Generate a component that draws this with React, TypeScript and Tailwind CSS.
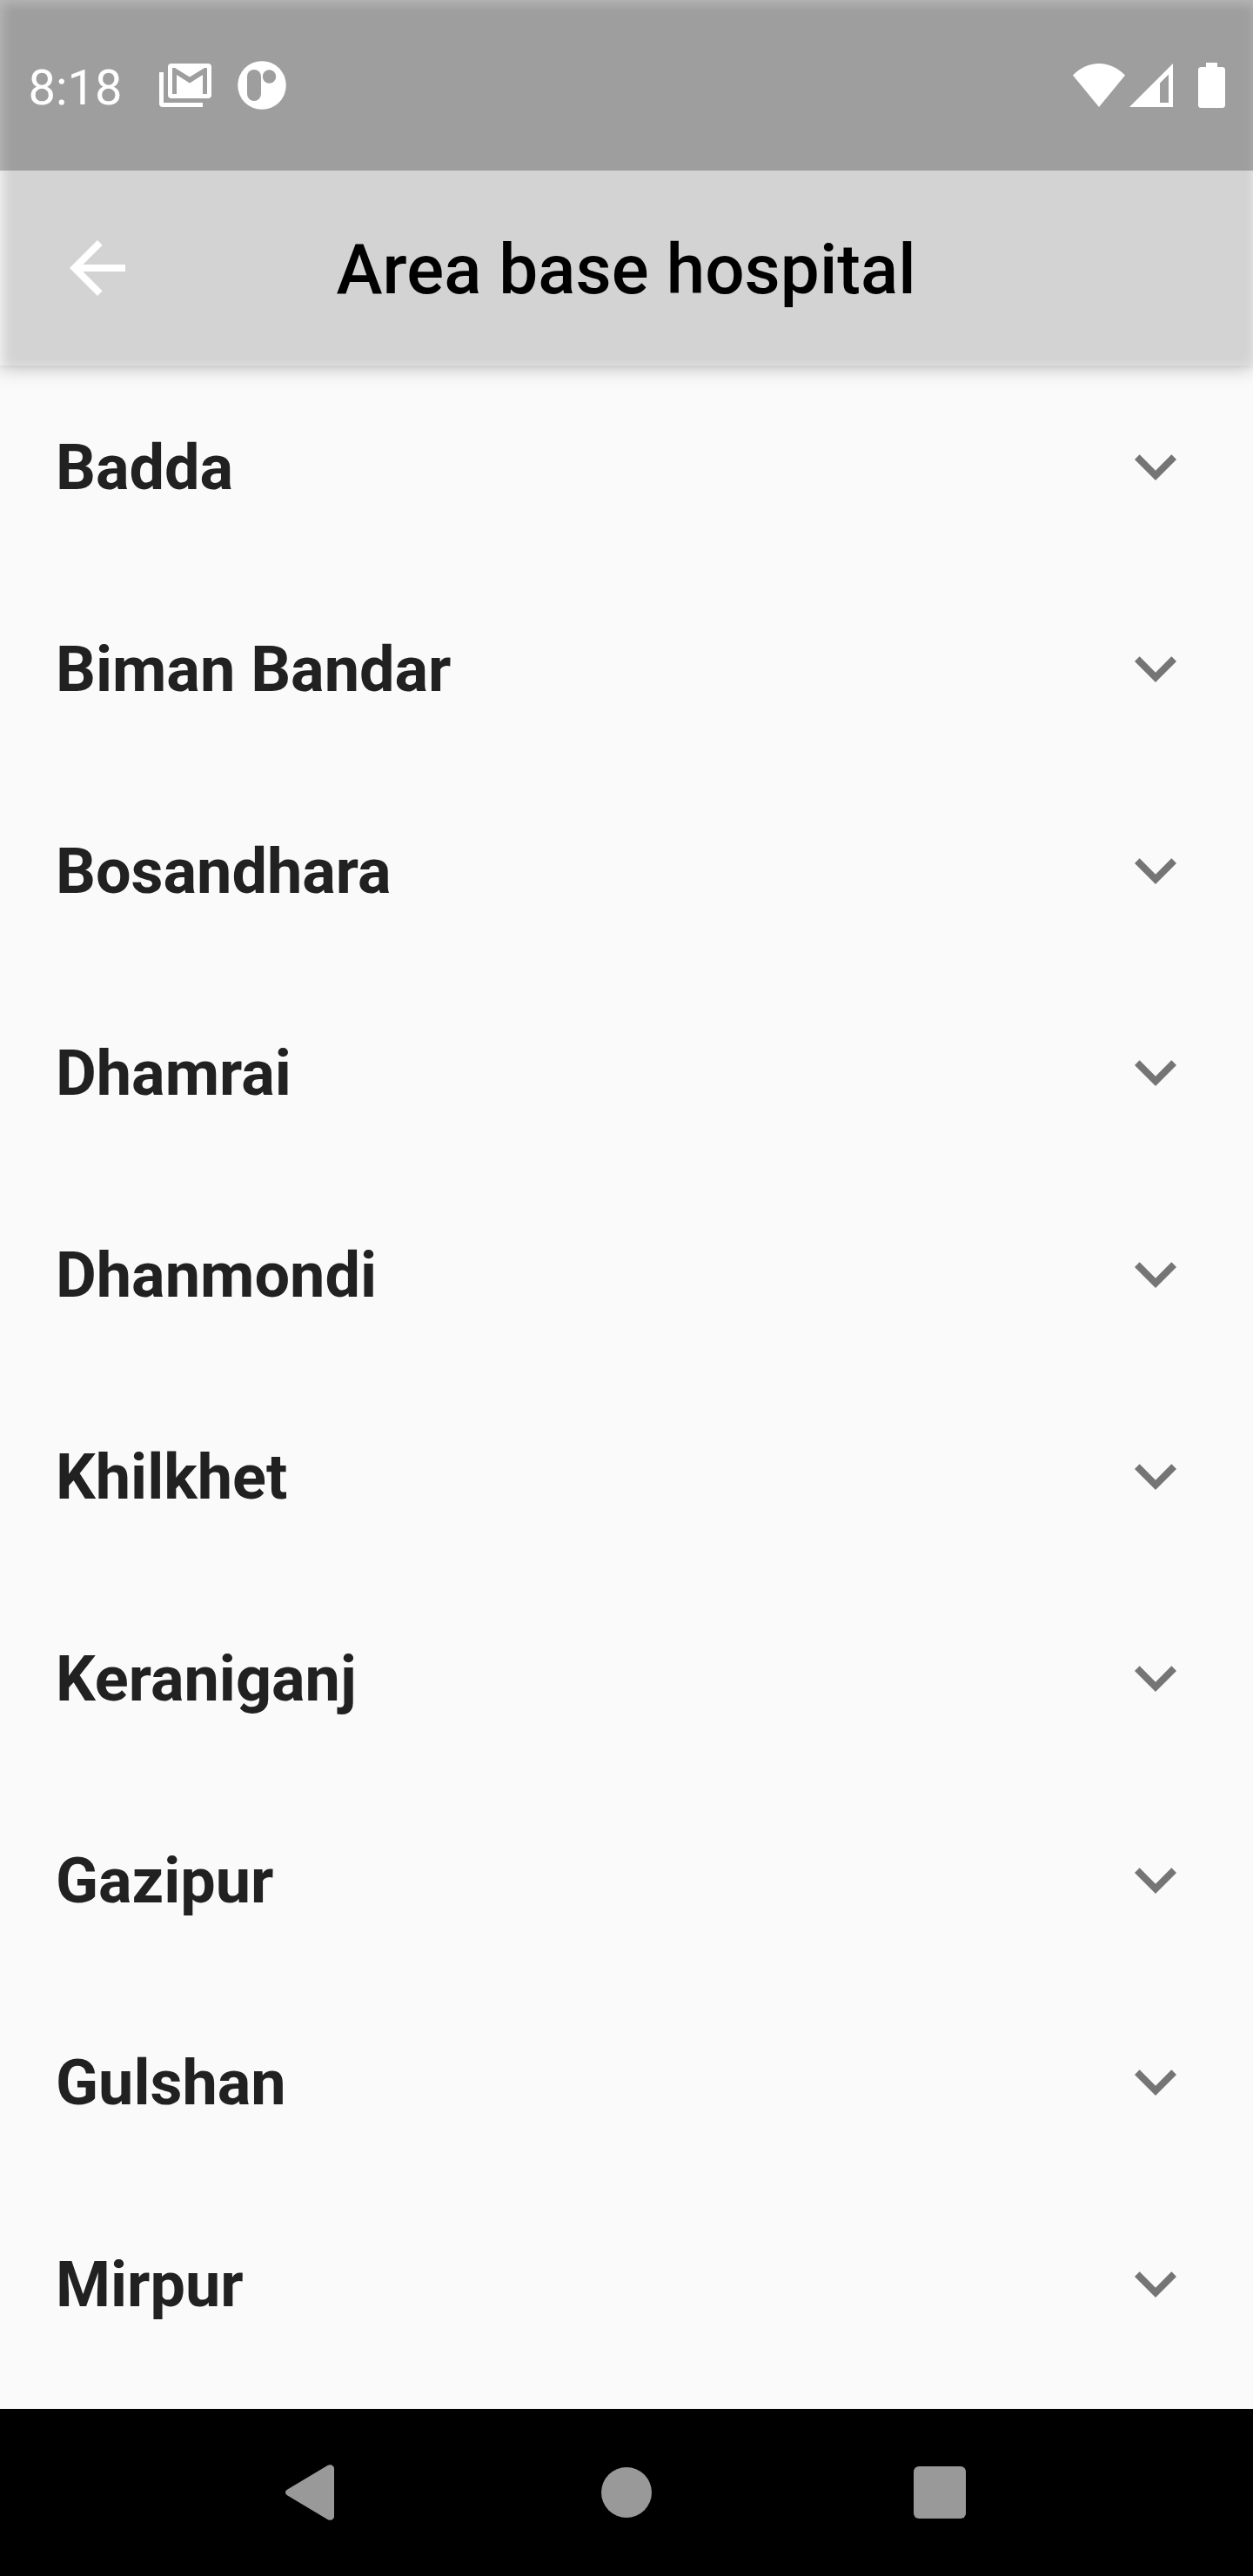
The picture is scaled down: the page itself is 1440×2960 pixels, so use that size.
const areas = [
  'Badda',
  'Biman Bandar',
  'Bosandhara',
  'Dhamrai',
  'Dhanmondi',
  'Khilkhet',
  'Keraniganj',
  'Gazipur',
  'Gulshan',
  'Mirpur',
];

function StatusBar() {
  return (
    <div className="relative flex h-[196px] items-center justify-between bg-black/25 text-white">
      <div className="flex items-center pl-[32px]">
        <span className="w-[151px] pt-[6px] pl-[0.5px] text-[56px] leading-[64px]">8:18</span>
        <svg className="h-[50px] w-[60px]" viewBox="0 0 60 50" fill="currentColor">
          <path d="M0 10h5v35h45v5H4a4 4 0 0 1-4-4z" />
          <path
            fillRule="evenodd"
            d="M14 0h42a4 4 0 0 1 4 4v32a4 4 0 0 1-4 4H14a4 4 0 0 1-4-4V4a4 4 0 0 1 4-4zM15 5v30h5V13l15 9.500 15-9.500v22h5V5h-3L35 15.500 18 5z"
          />
        </svg>
        <svg className="ml-[30px] h-[56px] w-[56px]" viewBox="0 0 56 56">
          <circle cx="28" cy="28" r="27.800" fill="currentColor" />
          <rect x="11" y="10" width="16" height="36" rx="8" fill="#9e9e9e" />
          <circle cx="36.500" cy="18" r="7.700" fill="#9e9e9e" />
        </svg>
      </div>
      <div className="flex items-center pr-[32px]">
        <svg className="h-[50px] w-[60px]" viewBox="0 0 60 50" fill="currentColor">
          <path d="M30 50 0 13.500C8 5 19 0 30 0s22 5 30 13.500z" />
        </svg>
        <svg className="ml-[5px] h-[50px] w-[50px]" viewBox="0 0 50 50" fill="currentColor">
          <path fillRule="evenodd" d="M50 0v50H0zM45 12.500 35 22.500V45h10z" />
        </svg>
        <svg className="ml-[29px] h-[52px] w-[31px]" viewBox="0 0 31 52" fill="currentColor">
          <path d="M9 0h13v5h5.500A3.500 3.500 0 0 1 31 8.500v40a3.500 3.500 0 0 1-3.500 3.500h-24A3.500 3.500 0 0 1 0 48.500v-40A3.500 3.500 0 0 1 3.500 5H9z" />
        </svg>
      </div>
    </div>
  );
}

export default function App() {
  return (
    <div className="flex h-[2960px] w-[1440px] flex-col overflow-hidden bg-[#fafafa] font-[Roboto,sans-serif]">
      <header className="relative h-[420px] shrink-0 bg-[#d3d3d3] shadow-[0_4px_20px_rgba(0,0,0,0.22),0_1px_6px_rgba(0,0,0,0.08)]">
        <div className="pointer-events-none absolute inset-0 shadow-[inset_3px_4px_14px_rgba(255,255,255,0.8)]" />
        <StatusBar />
        <div className="flex h-[224px] items-center pl-[64px]">
          <svg className="h-24 w-24" viewBox="0 0 24 24" fill="white">
            <path d="M20 11H7.830l5.590-5.590L12 4l-8 8 8 8 1.410-1.410L7.830 13H20z" />
          </svg>
          <h1 className="ml-[226.5px] pt-[4px] text-[80px] leading-[94px] font-medium tracking-[0.07px] whitespace-nowrap text-black">
            Area base hospital
          </h1>
        </div>
      </header>
      <ul className="h-[2348px] shrink-0 overflow-hidden">
        {areas.map((area) => (
          <li key={area} className="flex h-[232px] items-center justify-between pr-16 pl-16">
            <span className="pt-[4px] text-[72px] leading-[84px] font-bold text-[#212121]">{area}</span>
            <svg className="h-24 w-24" viewBox="0 0 24 24" fill="#757575">
              <path d="M16.590 8.590 12 13.170 7.410 8.590 6 10l6 6 6-6z" />
            </svg>
          </li>
        ))}
      </ul>
      <nav className="flex h-[192px] shrink-0 items-center bg-black pl-[328px] text-[#999999]">
        <svg className="h-[64px] w-[56px]" viewBox="0 0 56 64" fill="currentColor">
          <path d="M2 28.800 48.800.8C52 -1 56 1 56 4.500v55c0 3.500-4 5.500-7.200 3.700L2 35.200c-2.600-1.600-2.600-4.800 0-6.400z" />
        </svg>
        <span className="ml-[307px] size-[58px] rounded-full bg-[#999999]" />
        <span className="ml-[301px] size-[60px] rounded-[6px] bg-[#999999]" />
      </nav>
    </div>
  );
}
